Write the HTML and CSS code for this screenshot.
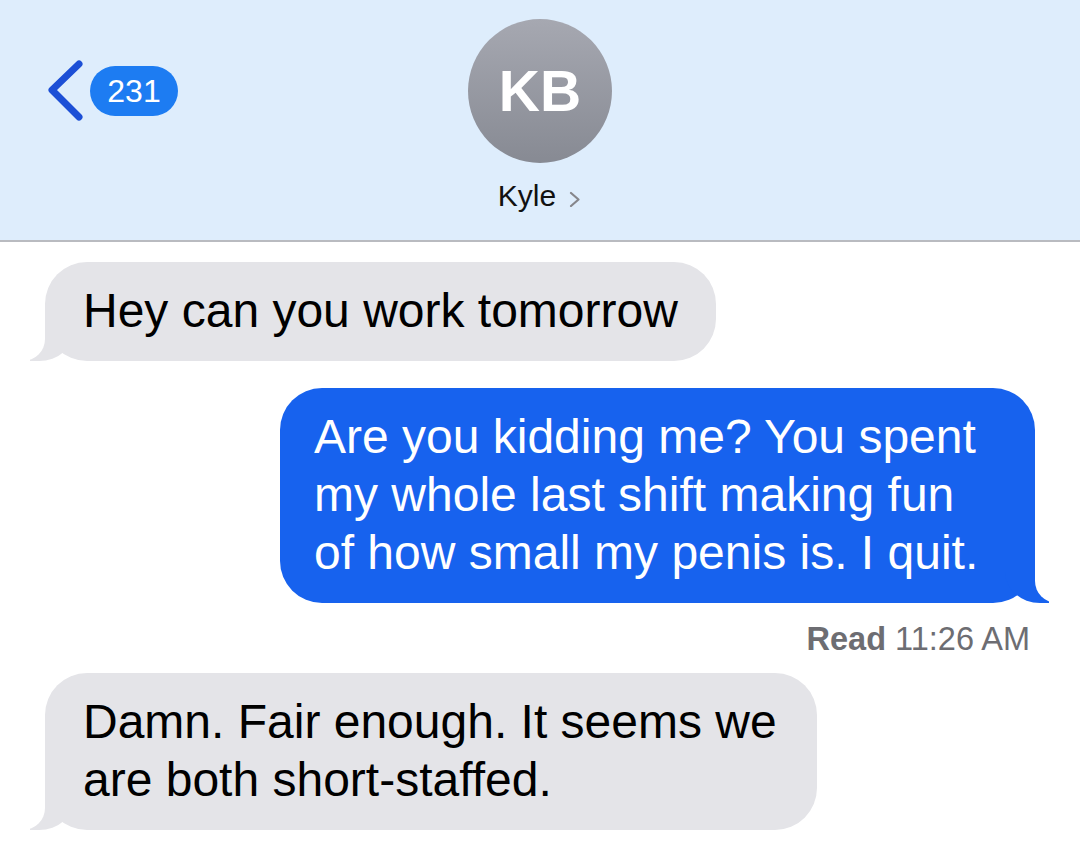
FILE: index.html
```html
<!DOCTYPE html>
<html lang="en">
<head>
<meta charset="utf-8">
<title>Kyle</title>
<link rel="stylesheet" href="styles.css">
</head>
<body>
<header class="header">
  <div class="header-top">
    <div class="back">
      <svg class="back-chevron" width="38" height="62" viewBox="0 0 38 62">
        <path d="M33 4 L6 30 L33 57" fill="none" stroke="#1c4fd6" stroke-width="7" stroke-linecap="round" stroke-linejoin="round"/>
      </svg>
      <span class="badge">231</span>
    </div>
    <div class="avatar">KB</div>
    <div></div>
  </div>
  <div class="name">
    <span>Kyle</span>
    <svg class="name-chevron" width="14" height="16" viewBox="0 0 14 16">
      <path d="M3 2 L10.5 8.5 L3 15" fill="none" stroke="#86868b" stroke-width="2.2" stroke-linecap="round" stroke-linejoin="round"/>
    </svg>
  </div>
</header>
<main class="thread">
  <div class="bubble in b1">Hey can you work tomorrow</div>
  <div class="bubble out b2">Are you kidding me? You spent my whole last shift making fun of how small my penis is. I quit.</div>
  <div class="receipt"><b>Read</b> 11:26 AM</div>
  <div class="bubble in b3">Damn. Fair enough. It seems we are both short-staffed.</div>
</main>
</body>
</html>
```

FILE: styles.css
```css
* { box-sizing: border-box; }
html, body {
  margin: 0;
  padding: 0;
  background: #ffffff;
  font-family: "Liberation Sans", Arial, sans-serif;
}
body { width: 1080px; height: 849px; overflow: hidden; }

.header {
  background: #deedfc;
  border-bottom: 2px solid #b9bbc0;
  height: 242px;
  padding-top: 19px;
  display: flex;
  flex-direction: column;
  align-items: stretch;
}
.header-top {
  display: grid;
  grid-template-columns: 1fr 144px 1fr;
  align-items: center;
}
.back {
  display: flex;
  align-items: center;
  padding-left: 46px;
  gap: 6px;
}
.back-chevron { display: block; }
.badge {
  display: inline-flex;
  align-items: center;
  justify-content: center;
  width: 88px;
  height: 50px;
  border-radius: 25px;
  background: #1d7cf2;
  color: #fff;
  font-size: 32px;
  line-height: 1;
}
.avatar {
  width: 144px;
  height: 144px;
  border-radius: 50%;
  background: linear-gradient(#a6a8b1, #878a93);
  color: #fff;
  font-size: 57px;
  font-weight: bold;
  display: flex;
  align-items: center;
  justify-content: center;
}
.name {
  margin-top: 16px;
  display: flex;
  align-items: center;
  justify-content: center;
  gap: 12px;
  font-size: 30px;
  line-height: 34px;
  color: #111;
}
.name-chevron { display: block; margin-top: 5px; }

.thread {
  padding: 20px 45px 0 45px;
  display: flex;
  flex-direction: column;
}
.bubble {
  position: relative;
  font-size: 48px;
  line-height: 58px;
  padding: 20px 38px 21px 38px;
  border-radius: 42px;
  width: fit-content;
}
.bubble.in {
  align-self: flex-start;
  background: #e4e4e8;
  color: #000;
  max-width: 772px;
}
.bubble.out {
  align-self: flex-end;
  background: #1762ee;
  color: #fff;
  max-width: 755px;
  padding-left: 34px;
  padding-right: 36px;
}
.bubble::before,
.bubble::after {
  content: "";
  position: absolute;
  bottom: 0;
  height: 55px;
}
.bubble.in::before {
  left: -15px;
  width: 44px;
  background: #e4e4e8;
  border-bottom-right-radius: 35px 31px;
}
.bubble.in::after {
  left: -57px;
  width: 57px;
  background: #fff;
  border-bottom-right-radius: 22px;
}
.bubble.out::before {
  right: -14px;
  width: 44px;
  background: #1762ee;
  border-bottom-left-radius: 35px 31px;
}
.bubble.out::after {
  right: -57px;
  width: 57px;
  background: #fff;
  border-bottom-left-radius: 22px;
}
.b2 { margin-top: 27px; }
.receipt {
  align-self: flex-end;
  margin-top: 19px;
  margin-right: 5px;
  font-size: 32.5px;
  line-height: 34px;
  color: #6d6d72;
}
.receipt b { font-weight: bold; }
.b3 { margin-top: 17px; }
```
